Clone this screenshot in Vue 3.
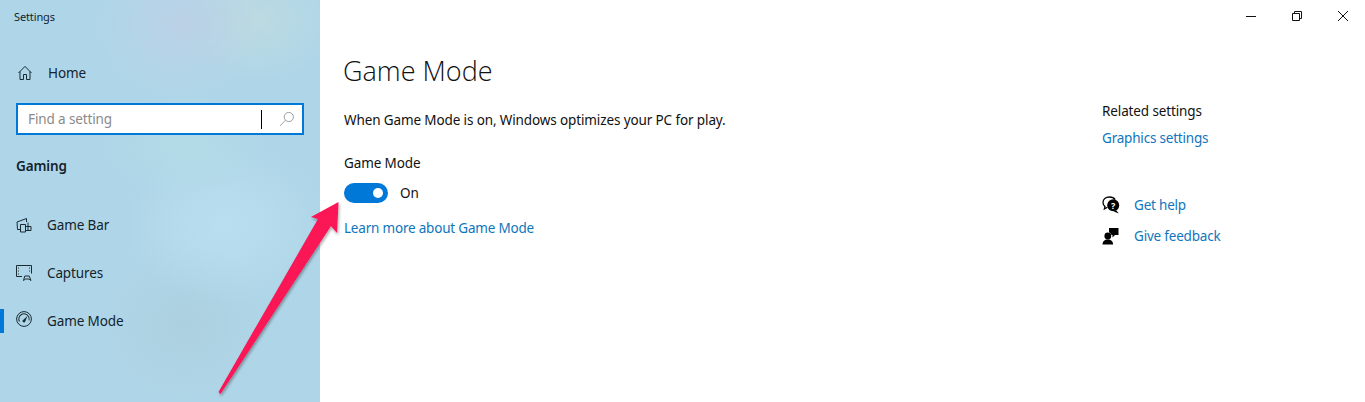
<script setup>
const navItems = [
  { label: 'Game Bar', icon: 'bar' },
  { label: 'Captures', icon: 'captures' },
  { label: 'Game Mode', icon: 'gauge', active: true }
]
</script>

<template>
  <div class="window">
    <aside class="sidebar">
      <div class="app-title">Settings</div>
      <div class="home-row">
        <svg class="nav-icon" width="16" height="16" viewBox="0 0 16 16" fill="none" stroke="#1a2a33" stroke-width="1">
          <path d="M1.500 8 8 1.400 14.500 8M3 6.500v8h3.500V9.500h3v5H13v-8" />
        </svg>
        <span>Home</span>
      </div>
      <div class="search">
        <span class="placeholder">Find a setting</span>
        <span class="caret"></span>
        <svg width="16" height="16" viewBox="0 0 16 16" fill="none" stroke="#9aa0a3" stroke-width="1">
          <circle cx="9.800" cy="6" r="4.600" />
          <path d="M6.400 9.200 1.200 14.800" />
        </svg>
      </div>
      <div class="section">Gaming</div>
      <nav class="nav">
        <div v-for="item in navItems" :key="item.label" class="nav-item" :class="{ active: item.active }">
          <svg v-if="item.icon === 'bar'" class="nav-icon" width="16" height="16" viewBox="0 0 16 16" fill="none" stroke="#1a2a33" stroke-width="1">
            <path d="M1.500 12.500 1 5l9.500-3.500V5M1.500 12.500h3M4.500 15V7.500h5V15zM9.500 9.500h5.500v4H9.500M12 5.500v8" />
          </svg>
          <svg v-else-if="item.icon === 'captures'" class="nav-icon" width="16" height="16" viewBox="0 0 16 16" fill="none" stroke="#1a2a33" stroke-width="1">
            <path d="M6 11.500H.5V.5h15v8" />
            <path d="M2.500 2.500v1M2.500 5.500v1M2.500 8.500v1M13.500 2.500v1M13.500 5.500v1" />
            <path d="M7.500 15.500 8.800 11h4.400l1.800 4.500-2-1.500H9.500z" />
          </svg>
          <svg v-else class="nav-icon gauge" width="16" height="16" viewBox="0 0 16 16" fill="none" stroke="#1a2a33" stroke-width="1">
            <circle cx="8" cy="8" r="7.400" />
            <circle cx="8" cy="8" r="5.200" stroke-dasharray="20 12.700" transform="rotate(150 8 8)" />
            <path d="M6.600 9.400 11.400 5 9.300 10.400a1.400 1.400 0 0 1-2.700-1z" fill="#1a2a33" stroke="none" />
          </svg>
          <span>{{ item.label }}</span>
        </div>
      </nav>
    </aside>

    <main class="main">
      <div class="controls">
        <svg width="10" height="10" viewBox="0 0 10 10" stroke="#111" fill="none"><path d="M0 5.500h10" /></svg>
        <svg width="10" height="10" viewBox="0 0 10 10" stroke="#111" fill="none"><path d="M.5 2.500h7v7h-7zM2.500 2.500v-2h7v7h-2" /></svg>
        <svg width="10" height="10" viewBox="0 0 10 10" stroke="#111" fill="none"><path d="m0 0 10 10M10 0 0 10" /></svg>
      </div>
      <div class="columns">
        <section class="content">
          <h1>Game Mode</h1>
          <p class="desc">When Game Mode is on, Windows optimizes your PC for play.</p>
          <div class="toggle-label">Game Mode</div>
          <div class="toggle-row">
            <span class="toggle"><span class="knob"></span></span>
            <span>On</span>
          </div>
          <a class="link">Learn more about Game Mode</a>
        </section>
        <section class="related">
          <div class="related-title">Related settings</div>
          <a class="link">Graphics settings</a>
          <div class="help">
            <div class="help-row">
              <svg width="18" height="18" viewBox="0 0 18 18">
                <path d="M7.500 1C3.600 1 1 3.400 1 6.400c0 1.700.9 3.100 2 4L2.400 13l3-1.700M7.500 1c2.500 0 4.500 1 5.600 2.600" fill="none" stroke="#000" stroke-width="1.300" />
                <circle cx="11.200" cy="9.200" r="6" fill="#000" />
                <path d="m14 14 2.800 3.500-5-2z" fill="#000" />
                <text x="11.200" y="12.500" class="qmark" text-anchor="middle">?</text>
              </svg>
              <a class="link">Get help</a>
            </div>
            <div class="help-row">
              <svg width="18" height="18" viewBox="0 0 18 18" fill="#000">
                <circle cx="5.800" cy="9" r="3.400" />
                <path d="M.500 17.500c0-3 2-5 5.300-5s5.300 2 5.300 5z" />
                <path d="M7 1h9.500v7h-3.500l-2.500 2.500V8H9.500C9.200 6.800 8.200 5.700 7 5.200z" />
              </svg>
              <a class="link">Give feedback</a>
            </div>
          </div>
        </section>
      </div>
    </main>

    <svg class="arrow" width="1365" height="402" viewBox="0 0 1365 402">
      <defs>
        <filter id="arrow-shadow" x="-20%" y="-20%" width="140%" height="140%">
          <feDropShadow dx="1" dy="2" stdDeviation="1.500" flood-color="#000" flood-opacity="0.35" />
        </filter>
      </defs>
      <path d="M338.500 202 337 233 331 226 220.500 394 218.500 392 318 219 311 217z" fill="#fb1257" filter="url(#arrow-shadow)" />
    </svg>
  </div>
</template>

<style>
html, body { margin: 0; background: #fff; }
</style>

<style scoped>
.window {
  position: relative;
  display: flex;
  width: 1365px;
  height: 402px;
  overflow: hidden;
  font-family: "Noto Sans", "Open Sans", sans-serif;
  font-size: 13.500px;
  letter-spacing: -0.12px;
  color: #111;
  background: #fff;
}

/* Sidebar */
.sidebar {
  flex: 0 0 320px;
  box-sizing: border-box;
  color: #14232c;
  background:
    radial-gradient(ellipse 80px 70px at 180px 25px, rgba(190, 208, 230, 0.8), transparent),
    radial-gradient(ellipse 80px 60px at 255px 20px, rgba(194, 220, 222, 0.7), transparent),
    radial-gradient(ellipse 80px 50px at 185px 145px, rgba(180, 222, 228, 0.6), transparent),
    radial-gradient(ellipse 100px 80px at 225px 225px, rgba(190, 226, 242, 0.7), transparent),
    radial-gradient(ellipse 90px 80px at 185px 325px, rgba(170, 204, 218, 0.6), transparent),
    #afd6e8;
}
.app-title {
  padding: 9px 0 0 14px;
  height: 23px;
  font-size: 11px;
  line-height: 15px;
}
.home-row {
  display: flex;
  align-items: center;
  gap: 15px;
  margin-top: 31px;
  padding-left: 17px;
  height: 20px;
}
.search {
  display: flex;
  align-items: center;
  box-sizing: border-box;
  width: 288px;
  height: 32px;
  margin: 20px 0 0 16px;
  padding: 0 7px 0 10px;
  background: #fff;
  border: 2px solid #0078d7;
}
.placeholder {
  flex: 1;
  color: #8a8a8a;
}
.caret {
  width: 1px;
  height: 19px;
  margin-right: 17px;
  background: #000;
}
.section {
  margin: 21px 0 0 16px;
  font-weight: 600;
  line-height: 20px;
}
.nav {
  margin-top: 25px;
}
.nav-item {
  display: flex;
  align-items: center;
  gap: 15px;
  height: 48px;
  padding-left: 16px;
  position: relative;
}
.nav-item.active::before {
  content: "";
  position: absolute;
  left: 0;
  top: 12px;
  width: 4px;
  height: 24px;
  background: #0078d7;
}
.nav-icon {
  flex: none;
}
.gauge {
  margin-top: -4px;
}

/* Main */
.main {
  flex: 1;
  min-width: 0;
}
.controls {
  display: flex;
  justify-content: flex-end;
  align-items: center;
  gap: 36px;
  height: 32px;
  padding-right: 17px;
}
.columns {
  display: flex;
  justify-content: space-between;
}
.content {
  padding-left: 23px;
}
h1 {
  margin: 19px 0 0;
  font-family: "Open Sans", "Noto Sans", sans-serif;
  font-size: 27px;
  font-weight: 300;
  letter-spacing: 0;
  line-height: 40px;
  color: #111;
}
.desc {
  margin: 19px 0 0 1px;
  line-height: 20px;
}
.toggle-label {
  margin: 23px 0 0 1px;
  line-height: 20px;
}
.toggle-row {
  display: flex;
  align-items: center;
  gap: 12px;
  margin: 10px 0 0 1px;
  height: 20px;
}
.toggle {
  display: flex;
  align-items: center;
  justify-content: flex-end;
  box-sizing: border-box;
  width: 44px;
  height: 20px;
  padding-right: 5px;
  border-radius: 10px;
  background: #0078d7;
}
.knob {
  width: 10px;
  height: 10px;
  border-radius: 50%;
  background: #fff;
}
.link {
  display: block;
  color: #0f75bd;
  line-height: 20px;
  letter-spacing: -0.2px;
}
.content .link {
  margin: 15px 0 0 1px;
}
.related {
  width: 263px;
  padding-top: 69px;
  box-sizing: border-box;
}
.related-title {
  line-height: 20px;
}
.related > .link {
  margin-top: 7px;
}
.help {
  margin-top: 47px;
  display: flex;
  flex-direction: column;
  gap: 11px;
}
.help-row {
  display: flex;
  align-items: center;
  gap: 14px;
  height: 20px;
}
.qmark {
  font-size: 9px;
  font-weight: 700;
  fill: #fff;
}

/* Annotation */
.arrow {
  position: absolute;
  left: 0;
  top: 0;
  pointer-events: none;
}
</style>
